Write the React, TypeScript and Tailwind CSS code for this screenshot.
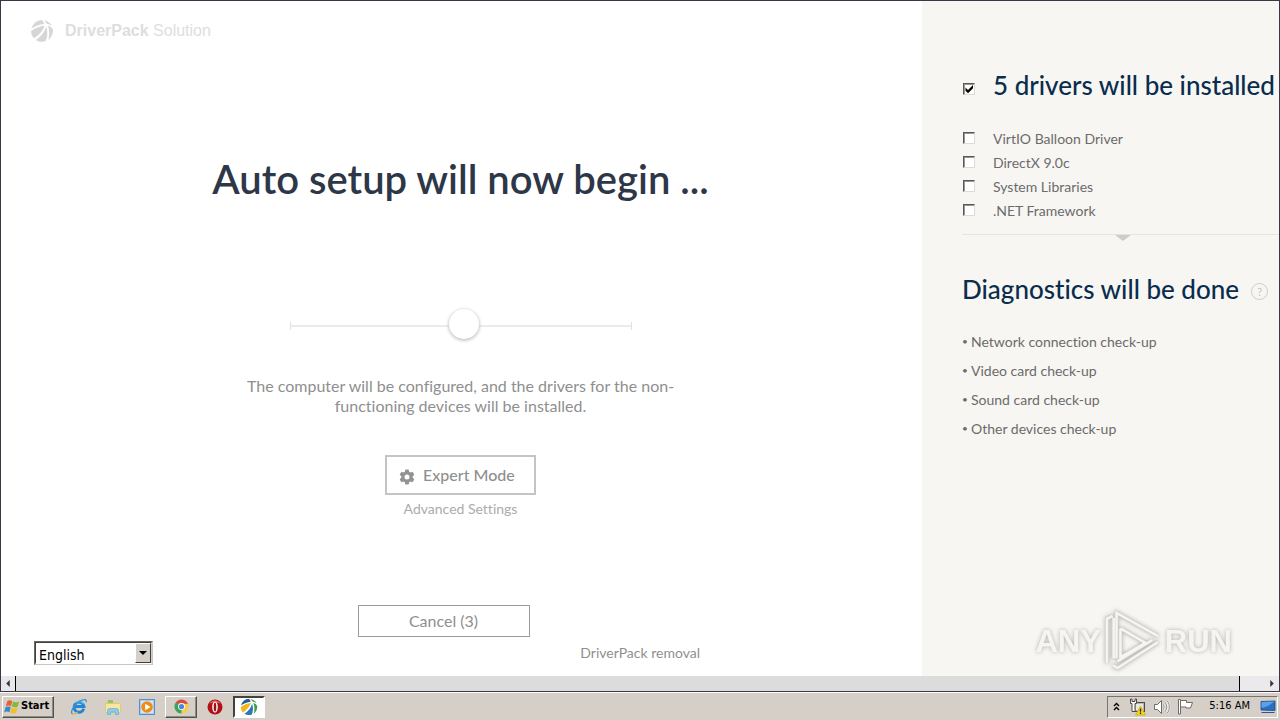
import { useState, type ReactNode } from "react";

const drivers = ["VirtIO Balloon Driver", "DirectX 9.0c", "System Libraries", ".NET Framework"];

const checks = [
  "Network connection check-up",
  "Video card check-up",
  "Sound card check-up",
  "Other devices check-up",
];

function Check({ id, defaultChecked = false, label, className }: { id: string; defaultChecked?: boolean; label?: string; className: string }) {
  return (
    <span className={`relative flex h-3 w-3 shrink-0 ${className}`}>
      <input
        id={id}
        type="checkbox"
        aria-label={label}
        defaultChecked={defaultChecked}
        className="peer h-3 w-3 appearance-none border border-t-[#5a5856] border-l-[#5a5856] border-r-[#dedbd6] border-b-[#dedbd6] bg-white shadow-[inset_1px_1px_0_#9a9894]"
      />
      <svg viewBox="0 0 12 12" className="pointer-events-none absolute inset-0 hidden h-3 w-3 peer-checked:block">
        <path d="M2.500 4.500v3.200L5 10.200l5-5V2L5 7z" fill="#000" />
      </svg>
    </span>
  );
}

function BallLogo({ colors, className }: { colors: [string, string, string, string, string]; className: string }) {
  return (
    <svg viewBox="0 0 24 24" className={className} aria-hidden="true">
      <path d="M1.500 9.500C3 4.500 7.500 1.200 11.500 1.100c1.500 1 2.300 2.300 2.700 3.900C9.500 5.600 5.500 7.100 1.500 9.500z" fill={colors[0]} />
      <path d="M14 1.200c3.500.6 6.300 2.600 7.900 5.600-1.500-1-3.300-1.700-5.200-2C16.200 3.400 15.200 2.200 14 1.200z" fill={colors[1]} />
      <path d="M18 6.700c2.400.6 4.100 1.900 5 4.300.1 4.100-1.600 7.600-4.700 9.900C19.600 16.400 19.600 11.300 18 6.700z" fill={colors[2]} />
      <path d="M1.100 12C5 9 9.500 7.300 14.500 6.800c-1 4-5 9-10.300 12.500C2.200 17.600 1 15 1.100 12z" fill={colors[3]} />
      <path d="M16.200 7.500c1.700 5 1.400 10-.4 14.600-3.300 1.300-7 .8-9.900-1.200C11 17.500 15 12.500 16.200 7.500z" fill={colors[4]} />
    </svg>
  );
}

function Gear() {
  return (
    <svg viewBox="0 0 16 16" className="mt-1 h-4 w-4" aria-hidden="true">
      <g fill="#939393">
        <rect x="6" y="0.500" width="4" height="15" rx="1" />
        <rect x="6" y="0.500" width="4" height="15" rx="1" transform="rotate(60 8 8)" />
        <rect x="6" y="0.500" width="4" height="15" rx="1" transform="rotate(120 8 8)" />
        <circle cx="8" cy="8" r="5.800" />
      </g>
      <circle cx="8" cy="8" r="2.500" fill="#fff" />
    </svg>
  );
}

function IeIcon() {
  return (
    <svg viewBox="0 0 18 18" className="h-[18px] w-[18px]" aria-hidden="true">
      <path d="M13.800 10.800a5 5 0 1 1 .2-2.300H5.500" fill="none" stroke="#1f86d8" strokeWidth="2.800" />
      <path d="M13.500 5.500a5.500 5.500 0 0 0-8-.8" fill="none" stroke="#6cc4f3" strokeWidth="1.500" />
      <path d="M2.500 16C-.5 14 5 5.500 10.500 2.800c4-2 6.500-1.500 5.500 1.500" fill="none" stroke="#3f93cf" strokeWidth="1.300" />
      <path d="M2.500 16c1.500.5 3.500-.8 5-2" fill="none" stroke="#d9b84a" strokeWidth="1.200" />
    </svg>
  );
}

function FolderIcon() {
  return (
    <svg viewBox="0 0 18 18" className="h-[18px] w-[18px]" aria-hidden="true">
      <path d="M2 3h5l1 1.500h7V14H2z" fill="#e9cf74" />
      <path d="M4 2h5v3H4z" fill="#8fc46c" />
      <path d="M1.500 5.500h15v9h-15z" fill="#f8e6a0" stroke="#d9bd66" strokeWidth=".6" />
      <path d="M3.500 16.500v-4a2 2 0 0 1 2-2h7a2 2 0 0 1 2 2v4h-3v-2.500h-5v2.500z" fill="#8ccbea" stroke="#5aa6d2" strokeWidth=".6" />
    </svg>
  );
}

function MediaIcon() {
  return (
    <svg viewBox="0 0 16 16" className="h-4 w-4" aria-hidden="true">
      <rect x=".5" y=".5" width="15" height="15" fill="#a9cdee" stroke="#4f92d1" />
      <rect x="2" y="2" width="12" height="12" fill="#d5e8f8" />
      <circle cx="8" cy="8" r="5.800" fill="#f28a16" />
      <path d="M6.200 4.700v6.600L11.500 8z" fill="#fff" />
    </svg>
  );
}

function ChromeIcon() {
  return (
    <svg viewBox="0 0 16 16" className="h-[15px] w-[15px]" aria-hidden="true">
      <path d="M8 8 1.500 4.250A7.500 7.500 0 0 1 14.500 4.250z" fill="#dd4b3e" />
      <path d="M8 8 14.500 4.250A7.500 7.500 0 0 1 8 15.500z" fill="#f7cd45" />
      <path d="M8 8v7.500A7.500 7.500 0 0 1 1.500 4.250z" fill="#3fa45b" />
      <path d="M8 4.500h6.600L11 10z" fill="#f7cd45" />
      <path d="M1.500 4.250 5 10l3-5.500z" fill="#3fa45b" />
      <path d="M1.500 4.250H14.600L14.800 5H8z" fill="#dd4b3e" />
      <circle cx="8" cy="8" r="3.700" fill="#fff" />
      <circle cx="8" cy="8" r="2.800" fill="#4a86e0" />
    </svg>
  );
}

function OperaIcon() {
  return (
    <svg viewBox="0 0 16 16" className="h-4 w-4" aria-hidden="true">
      <circle cx="8" cy="8" r="7.500" fill="#b01217" />
      <path d="M2 5a7 7 0 0 1 12 0c-3-2-9-2-12 0z" fill="#e0605f" />
      <ellipse cx="8" cy="8" rx="2.800" ry="5.600" fill="#fff" />
      <ellipse cx="8" cy="8" rx="1.300" ry="4.600" fill="#a51015" />
    </svg>
  );
}

function WindowsFlag() {
  return (
    <svg viewBox="0 0 16 16" className="h-4 w-4" aria-hidden="true">
      <path d="M3.200 2.200c2-1.200 3.500-1 5 0L7 7.300c-1.700-1-3.300-1-5.200.1z" fill="#e5662c" />
      <path d="M9 2.600c2 1 3.800 1 6.200-.2L13.800 7.500c-2 1.100-4 1.100-6 .1z" fill="#86b935" />
      <path d="M1.500 8.300c2-1.100 3.600-1 5.200 0l-1.300 5c-1.700-1-3.300-1-5.200.1z" fill="#3c86cc" />
      <path d="M7.500 8.700c2 1 3.900 1 6 0l-1.400 5c-2 1.100-4 1.100-6 .1z" fill="#f3bd2c" />
    </svg>
  );
}

function NetworkIcon() {
  return (
    <svg viewBox="0 0 18 18" className="h-[18px] w-[18px]" aria-hidden="true">
      <rect x="5.500" y="4.500" width="10" height="9" fill="#b9b7b2" stroke="#4b4a48" />
      <rect x="7" y="6" width="7" height="6" fill="#e9e7e2" />
      <path d="M1.500 1v4.500H3v8h3v-8h1.500V1H6v2.500H3V1z" fill="#fff" stroke="#4b4a48" />
      <path d="M11.500 8 16.500 17h-10z" fill="#f6d61c" stroke="#c7a200" strokeWidth=".6" />
      <path d="M11.500 10.500v3.300M11.500 14.600V16" stroke="#222" strokeWidth="1.300" />
    </svg>
  );
}

function SpeakerIcon() {
  return (
    <svg viewBox="0 0 18 18" className="h-[18px] w-[18px]" fill="none" aria-hidden="true">
      <path d="M1.500 6.500h3l4-4v13l-4-4h-3z" fill="#fff" stroke="#6e6c69" />
      <path d="M10.500 6.500q1.500 2.500 0 5M12.500 4.500q3 4.500 0 9M14.500 3q3.800 6 0 12" stroke="#fff" strokeWidth="2" />
      <path d="M10.500 6.500q1.500 2.500 0 5M12.500 4.500q3 4.500 0 9M14.500 3q3.800 6 0 12" stroke="#7d7b78" strokeWidth=".9" />
    </svg>
  );
}

function FlagIcon() {
  return (
    <svg viewBox="0 0 18 18" className="h-[18px] w-[18px]" aria-hidden="true">
      <path d="M1.500 1.500h2V16h-2z" fill="#fff" stroke="#6e6c69" />
      <path d="M3.500 2.500h6v2h6l-2 5.500H9V9H3.500z" fill="#fff" stroke="#6e6c69" />
    </svg>
  );
}

function DesktopIcon() {
  return (
    <svg viewBox="0 0 16 14" className="h-[14px] w-4" aria-hidden="true">
      <path d="M1 1.500 15 1v9.500L1 10z" fill="#2a6fc4" stroke="#1b4585" strokeWidth=".8" />
      <path d="M1.500 2 14.500 1.500 8 6 1.500 8z" fill="#5ea0e4" />
      <path d="M2 12h12l1 1H1z" fill="#30578d" />
    </svg>
  );
}

function Watermark() {
  return (
    <div className="pointer-events-none absolute right-[47px] bottom-[3px] flex items-center gap-[3px] font-['Liberation_Sans',sans-serif] text-[31px] leading-none font-bold text-[#f6f5f2] drop-shadow-[0_0_2px_#b0aeaa]">
      <span>ANY</span>
      <svg viewBox="0 0 60 64" className="h-16 w-[58px]" fill="none" aria-hidden="true">
        <path d="M3 55V9l6-3M10 50V8M13 50V3L56 27M17 19v30l26-15-26-15M56 33 14 60l-5-3M50 31 14 53" stroke="#cfcdc9" strokeWidth="4" />
        <path d="M3 55V9l6-3M10 50V8M13 50V3L56 27M17 19v30l26-15-26-15M56 33 14 60l-5-3M50 31 14 53" stroke="#f6f5f2" strokeWidth="2.600" />
      </svg>
      <span>RUN</span>
    </div>
  );
}

function TaskButton({ label, className = "", children }: { label: string; className?: string; children: ReactNode }) {
  return (
    <button type="button" aria-label={label} className={`flex h-[22px] w-8 items-center justify-center ${className}`}>
      {children}
    </button>
  );
}

const raised = "border border-t-white border-l-white border-r-[#55524e] border-b-[#55524e] shadow-[inset_-1px_-1px_0_#8f8b84]";

function MainPanel() {
  const [language, setLanguage] = useState("English");
  return (
    <main className="flex min-w-0 flex-1 flex-col bg-white pr-0.5">
      <header className="flex h-[60px] items-center gap-[11px] pl-[29px]">
        <BallLogo colors={["#d6d6d6", "#d6d6d6", "#d6d6d6", "#d6d6d6", "#d6d6d6"]} className="h-6 w-6" />
        <span className="font-['Liberation_Sans',Arial,sans-serif] text-base text-[#dedede]">
          <b>DriverPack</b> Solution
        </span>
      </header>
      <h1 className="mt-[94px] text-center text-[40px] leading-[48px] font-semibold text-[#2d3748]">Auto setup will now begin ...</h1>
      <div className="mt-[107px] flex items-center justify-center">
        <span className="h-2 w-px bg-[#e2e2e2]" />
        <input
          type="range"
          aria-label="Setup progress"
          defaultValue={51}
          className="h-8 w-[340px] appearance-none bg-transparent [&::-webkit-slider-runnable-track]:h-0.5 [&::-webkit-slider-runnable-track]:bg-[#ebebeb] [&::-webkit-slider-thumb]:-mt-4 [&::-webkit-slider-thumb]:h-[30px] [&::-webkit-slider-thumb]:w-[30px] [&::-webkit-slider-thumb]:appearance-none [&::-webkit-slider-thumb]:rounded-full [&::-webkit-slider-thumb]:bg-white [&::-webkit-slider-thumb]:shadow-[0_1px_3px_1px_#cccccc]"
        />
        <span className="h-2 w-px bg-[#e2e2e2]" />
      </div>
      <p className="mx-auto mt-[34px] w-[450px] text-center text-base leading-5 text-[#8f8f8f]">
        The computer will be configured, and the drivers for the non-functioning devices will be installed.
      </p>
      <button
        type="button"
        className="mx-auto mt-[39px] flex h-10 w-[151px] items-center gap-2 border-2 border-[#c4c4c4] pl-3 text-base font-medium text-[#8f8f8f]"
      >
        <Gear />
        Expert Mode
      </button>
      <a href="#advanced" className="mx-auto mt-1 text-sm leading-5 text-[#ababab]">
        Advanced Settings
      </a>
      <div className="mt-[86px] flex justify-center pr-[34px]">
        <button type="button" className="h-8 w-[172px] border border-[#9b9b9b] pb-px text-base text-[#8f8f8f]">
          Cancel (3)
        </button>
      </div>
      <div className="mt-1 flex items-center justify-between pr-[220px] pl-[33px]">
        <div className="relative border border-t-[#6b6965] border-l-[#6b6965] border-r-[#c9c6c0] border-b-[#c9c6c0]">
          <select
            aria-label="Language"
            value={language}
            onChange={(event) => setLanguage(event.target.value)}
            className="block h-[22px] w-[117px] appearance-none border border-[#404040] border-r-[#d4d0c8] border-b-white bg-white pt-0.5 pl-[3px] font-['DejaVu_Sans_Condensed','Noto_Sans',sans-serif] text-sm leading-5 text-black"
          >
            <option>English</option>
            <option>Deutsch</option>
          </select>
          <span className="pointer-events-none absolute top-px right-px flex h-5 w-4 items-center justify-center border border-t-white border-l-white border-r-[#404040] border-b-[#404040] bg-[#d4d0c8]">
            <svg viewBox="0 0 8 4" className="h-1 w-2">
              <path d="M0 0h8L4 4z" fill="#000" />
            </svg>
          </span>
        </div>
        <a href="#removal" className="text-sm leading-5 text-[#8f8f8f]">
          DriverPack removal
        </a>
      </div>
    </main>
  );
}

function Sidebar() {
  return (
    <aside className="relative w-[357px] shrink-0 overflow-hidden bg-[#f8f6f3] pl-10 whitespace-nowrap">
      <div className="mt-[68px] flex items-center gap-[18px] pl-px">
        <Check id="all" label="Install all drivers" defaultChecked className="mt-2" />
        <h2 className="text-[26px] leading-8 font-medium text-[#0a2d4d]">5 drivers will be installed</h2>
      </div>
      <ul className="mt-[26px] flex flex-col text-sm text-[#6b6b6b]">
        {drivers.map((name, index) => (
          <li key={name} className="flex h-6 items-start gap-[18px] pl-px">
            <Check id={`driver-${index}`} className="mt-[5px]" />
            <label htmlFor={`driver-${index}`} className="leading-6">
              {name}
            </label>
          </li>
        ))}
      </ul>
      <div className="mt-[11px] flex justify-center border-t border-[#e6e4e0] pl-1">
        <svg viewBox="0 0 16 6" className="h-1.5 w-4" aria-hidden="true">
          <path d="M0 0h16L8 6z" fill="#cfcdca" />
        </svg>
      </div>
      <div className="mt-8 flex items-center gap-3">
        <h2 className="text-[26px] leading-8 font-medium text-[#0a2d4d]">Diagnostics will be done</h2>
        <button type="button" className="mt-1 h-[17px] w-[17px] rounded-full border border-[#cfcdca] text-[11px] leading-none text-[#c4c2bf]">
          ?
        </button>
      </div>
      <ul className="mt-[22px] flex flex-col text-sm leading-[29px] text-[#6b6b6b]">
        {checks.map((name) => (
          <li key={name} className="flex">
            <span className="w-[9px] text-[10px]">•</span>
            {name}
          </li>
        ))}
      </ul>
      <Watermark />
    </aside>
  );
}

function ScrollBar() {
  return (
    <div className="flex h-[15px] bg-[#dddcdd]">
      <button type="button" aria-label="Scroll left" className="flex w-[15px] items-center justify-center border-r border-black bg-[#e8e8ec]">
        <svg viewBox="0 0 4 8" className="h-[7px] w-1">
          <path d="M4 0v8L0 4z" fill="#333" />
        </svg>
      </button>
      <span className="flex-1" />
      <button type="button" aria-label="Scroll right" className="flex w-10 items-center justify-end border-l border-black bg-[#ebe9ec] pr-[5px]">
        <svg viewBox="0 0 4 8" className="h-[7px] w-1">
          <path d="M0 0v8l4-4z" fill="#333" />
        </svg>
      </button>
    </div>
  );
}

function Taskbar() {
  return (
    <footer className="flex h-7 shrink-0 items-center border-t border-white bg-[#d5cfc8] px-0.5 font-['DejaVu_Sans_Condensed',sans-serif] text-xs text-black">
      <button type="button" className={`flex h-[22px] w-[52px] items-center gap-px pl-px text-[11px] font-bold ${raised}`}>
        <WindowsFlag />
        Start
      </button>
      <div className="ml-[9px] flex items-center gap-0.5">
        <TaskButton label="Internet Explorer"><IeIcon /></TaskButton>
        <TaskButton label="File Explorer"><FolderIcon /></TaskButton>
        <TaskButton label="Media Player"><MediaIcon /></TaskButton>
        <TaskButton label="Chrome" className={raised}><ChromeIcon /></TaskButton>
        <TaskButton label="Opera"><OperaIcon /></TaskButton>
        <TaskButton label="DriverPack" className="border-2 border-t-[#45423e] border-l-[#45423e] border-r-white border-b-white bg-white">
          <BallLogo colors={["#1f5f98", "#3f9b4b", "#3f9b4b", "#f0b51f", "#2c78b4"]} className="h-[18px] w-[18px]" />
        </TaskButton>
      </div>
      <div className="ml-auto flex h-[22px] items-center border border-t-[#77736d] border-l-[#77736d] border-r-white border-b-white pr-px pl-[5px]">
        <button type="button" aria-label="Show hidden icons" className="mr-[9px]">
          <svg viewBox="0 0 7 9" className="h-[9px] w-[7px]" fill="none" stroke="#000" strokeWidth="1.400">
            <path d="M1 4l2.500-2.500L6 4M1 8l2.500-2.500L6 8" />
          </svg>
        </button>
        <div className="flex items-center gap-1.5">
          <NetworkIcon />
          <SpeakerIcon />
          <FlagIcon />
        </div>
        <time className="mr-[10px] ml-[14px] text-[11px]">5:16 AM</time>
        <DesktopIcon />
      </div>
    </footer>
  );
}

export default function App() {
  return (
    <div className="flex min-h-screen flex-col overflow-hidden bg-[#d5cfc8] font-[Lato,sans-serif] [font-variant-ligatures:none]">
      <div className="flex flex-1 flex-col border border-[#3b3747]">
        <div className="flex flex-1">
          <MainPanel />
          <Sidebar />
        </div>
        <ScrollBar />
      </div>
      <Taskbar />
    </div>
  );
}
